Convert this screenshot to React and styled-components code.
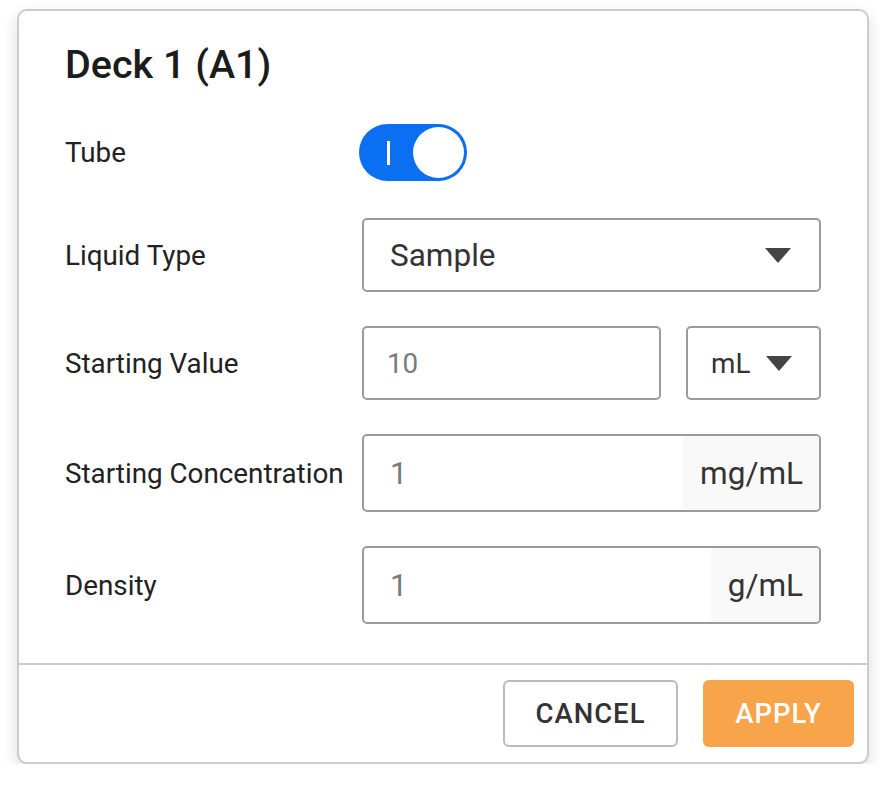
import React from 'react';
import styled, { createGlobalStyle } from 'styled-components';

const GlobalStyle = createGlobalStyle`
  * {
    box-sizing: border-box;
  }
  body {
    margin: 0;
    background: #ffffff;
    font-family: Roboto, "Liberation Sans", Arial, sans-serif;
  }
`;

const Page = styled.div`
  padding: 9px 0 0 17px;
`;

const Card = styled.div`
  width: 852px;
  height: 755px;
  border: 2px solid #cccccc;
  border-radius: 10px;
  background: #ffffff;
  box-shadow: 0 6px 16px rgba(0, 0, 0, 0.14);
  display: flex;
  flex-direction: column;
`;

const Body = styled.div`
  flex: 1;
  padding: 32px 46px 0 46px;
`;

const Title = styled.h1`
  margin: 0 0 38px 0;
  font-size: 39.5px;
  line-height: 43px;
  font-weight: 500;
  color: #1c1c1c;
`;

const Form = styled.div`
  display: flex;
  flex-direction: column;
  gap: 34px;
`;

const Row = styled.div`
  display: grid;
  grid-template-columns: 297px 1fr;
  align-items: center;
  height: ${(p) => p.height}px;
  margin-bottom: ${(p) => p.extra || 0}px;
`;

const Label = styled.div`
  font-size: 27.8px;
  color: #222222;
`;

const Switch = styled.div`
  width: 108px;
  height: 57px;
  border-radius: 29px;
  background: #0a6ff0;
  display: flex;
  align-items: center;
  justify-content: space-between;
  padding: 0 3px 0 28px;
  margin-left: -3px;
`;

const SwitchMark = styled.span`
  width: 3px;
  height: 24px;
  background: #ffffff;
`;

const Knob = styled.span`
  width: 51px;
  height: 51px;
  border-radius: 50%;
  background: #ffffff;
`;

const Controls = styled.div`
  display: flex;
  gap: 25px;
  height: 100%;
`;

const Box = styled.div`
  flex: ${(p) => (p.width ? `0 0 ${p.width}px` : 1)};
  height: 100%;
  border: 2px solid #9b9b9b;
  border-radius: 5px;
  display: flex;
  align-items: center;
  overflow: hidden;
`;

const Value = styled.span`
  flex: 1;
  padding-left: ${(p) => p.pad || 26}px;
  font-size: ${(p) => p.size || 31.5}px;
  color: ${(p) => (p.muted ? '#7a7a7a' : '#333333')};
`;

const Arrow = styled.span`
  width: 0;
  height: 0;
  border-left: 13px solid transparent;
  border-right: 13px solid transparent;
  border-top: 15px solid #444444;
  margin-right: ${(p) => p.right || 28}px;
`;

const Addon = styled.span`
  align-self: stretch;
  display: flex;
  align-items: center;
  padding: 0 16px 0 17px;
  background: #f9f9f9;
  font-size: 31.5px;
  color: #333333;
`;

const Footer = styled.div`
  height: 99px;
  border-top: 2px solid #cccccc;
  display: flex;
  justify-content: flex-end;
  align-items: center;
  gap: 25px;
  padding-right: 13px;
`;

const Button = styled.button`
  height: 67px;
  width: ${(p) => p.width}px;
  border-radius: 6px;
  font-family: Roboto, "Liberation Sans", Arial, sans-serif;
  font-size: 27.5px;
  font-weight: 500;
  letter-spacing: 1px;
  cursor: pointer;
  border: ${(p) => (p.primary ? 'none' : '2px solid #bbbbbb')};
  background: ${(p) => (p.primary ? '#f7a44a' : '#ffffff')};
  color: ${(p) => (p.primary ? '#ffffff' : '#333333')};
`;

const App = () => {
  return (
    <Page>
      <GlobalStyle />
      <Card>
        <Body>
          <Title>Deck 1 (A1)</Title>
          <Form>
            <Row height={57} extra={3}>
              <Label>Tube</Label>
              <Switch>
                <SwitchMark />
                <Knob />
              </Switch>
            </Row>
            <Row height={74}>
              <Label>Liquid Type</Label>
              <Controls>
                <Box>
                  <Value>Sample</Value>
                  <Arrow />
                </Box>
              </Controls>
            </Row>
            <Row height={74}>
              <Label>Starting Value</Label>
              <Controls>
                <Box>
                  <Value muted size={27.8} pad={23}>10</Value>
                </Box>
                <Box width={135}>
                  <Value pad={23} size={27.8}>mL</Value>
                  <Arrow right={27} />
                </Box>
              </Controls>
            </Row>
            <Row height={78}>
              <Label>Starting Concentration</Label>
              <Controls>
                <Box>
                  <Value muted size={31}>1</Value>
                  <Addon>mg/mL</Addon>
                </Box>
              </Controls>
            </Row>
            <Row height={78}>
              <Label>Density</Label>
              <Controls>
                <Box>
                  <Value muted size={31}>1</Value>
                  <Addon>g/mL</Addon>
                </Box>
              </Controls>
            </Row>
          </Form>
        </Body>
        <Footer>
          <Button width={175}>CANCEL</Button>
          <Button primary width={151}>APPLY</Button>
        </Footer>
      </Card>
    </Page>
  );
};

export default App;
